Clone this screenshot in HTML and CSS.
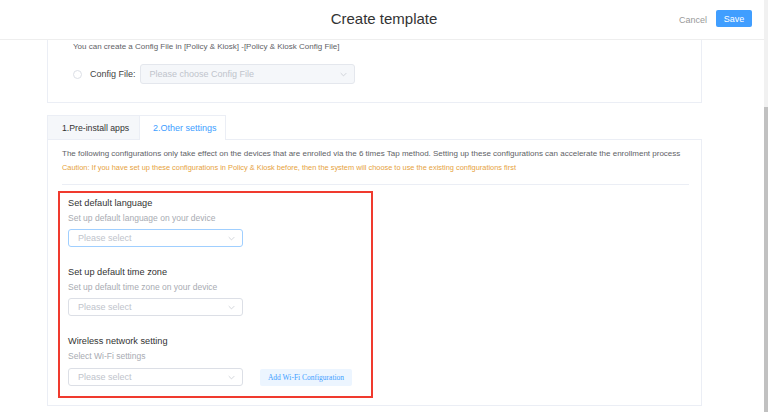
FILE: index.html
```html
<!DOCTYPE html>
<html lang="en">
<head>
    <meta charset="UTF-8">
    <meta name="viewport" content="width=device-width, initial-scale=1.0">
    <title>Create template</title>
    <link rel="stylesheet" href="styles.css">
</head>

<body>

<div class="page">
    <header class="topbar">
        <div></div>
        <h1 class="title">Create template</h1>
        <div class="actions">
            <button class="btn-cancel">Cancel</button>
            <button class="btn-save">Save</button>
        </div>
    </header>

    <main class="content">
        <!-- config file card, scrolled so its top is hidden -->
        <section class="card config-card">
            <p class="hint">You can create a Config File in [Policy &amp; Kiosk] -[Policy &amp; Kiosk Config File]</p>
            <div class="config-row">
                <span class="radio"></span>
                <span class="config-label">Config File:</span>
                <div class="select select-disabled">
                    <span>Please choose Config File</span>
                    <svg class="arrow" viewBox="0 0 10 6"><path d="M1 1l4 4 4-4" /></svg>
                </div>
            </div>
        </section>

        <section class="tabs-card">
            <div class="tabs">
                <div class="tab">1.Pre-install apps</div>
                <div class="tab tab-active">2.Other settings</div>
            </div>
            <div class="tab-panel">
                <p class="desc">The following configurations only take effect on the devices that are enrolled via the 6 times Tap method. Setting up these configurations can accelerate the enrollment process</p>
                <p class="caution">Caution: If you have set up these configurations in Policy &amp; Kiosk before, then the system will choose to use the existing configurations first</p>
                <div class="divider"></div>

                <div class="highlight">
                    <div class="field">
                        <div class="field-title">Set default language</div>
                        <div class="field-sub">Set up default language on your device</div>
                        <div class="select select-focus">
                            <span>Please select</span>
                            <svg class="arrow" viewBox="0 0 10 6"><path d="M1 1l4 4 4-4" /></svg>
                        </div>
                    </div>

                    <div class="field">
                        <div class="field-title">Set up default time zone</div>
                        <div class="field-sub">Set up default time zone on your device</div>
                        <div class="select">
                            <span>Please select</span>
                            <svg class="arrow" viewBox="0 0 10 6"><path d="M1 1l4 4 4-4" /></svg>
                        </div>
                    </div>

                    <div class="field">
                        <div class="field-title">Wireless network setting</div>
                        <div class="field-sub">Select Wi-Fi settings</div>
                        <div class="field-row">
                            <div class="select">
                                <span>Please select</span>
                                <svg class="arrow" viewBox="0 0 10 6"><path d="M1 1l4 4 4-4" /></svg>
                            </div>
                            <button class="btn-wifi">Add Wi-Fi Configuration</button>
                        </div>
                    </div>
                </div>
            </div>
        </section>
    </main>
</div>

<div class="scrollbar">
    <div class="thumb"></div>
</div>

</body>
</html>
```

FILE: styles.css
```css
/* Global Reset */
* {
    box-sizing: border-box;
    margin: 0;
    padding: 0;
    font-family: "Liberation Sans", Arial, sans-serif;
}

body {
    background: #fff;
    display: flex;
    height: 100vh;
    overflow: hidden;
}

.page {
    flex: 1;
    display: flex;
    flex-direction: column;
}

/* Header */
.topbar {
    height: 40px;
    flex-shrink: 0;
    display: grid;
    grid-template-columns: 1fr auto 1fr;
    align-items: center;
    border-bottom: 1px solid #eeeeee;
}

.title {
    font-size: 15px;
    font-weight: normal;
    color: #333;
    padding-left: 4px;
    margin-top: -3px;
}

.actions {
    display: flex;
    justify-content: flex-end;
    align-items: center;
    gap: 9px;
    padding-right: 12px;
}

button {
    border: none;
    background: none;
    cursor: pointer;
    white-space: nowrap;
}

.btn-cancel {
    font-size: 9px;
    color: #999;
}

.btn-save {
    width: 36px;
    height: 17px;
    font-size: 9px;
    color: #fff;
    background: #409eff;
    border-radius: 2px;
    margin-top: -2px;
}

/* Content */
.content {
    padding: 0 62px 0 47px;
    display: flex;
    flex-direction: column;
    gap: 12px;
}

.card {
    border: 1px solid #ebeef5;
    border-top: none;
}

.config-card {
    height: 63px;
    padding: 1px 0 0 25px;
}

.hint {
    font-size: 8px;
    color: #606266;
    line-height: 12px;
}

.config-row {
    display: flex;
    align-items: center;
    margin-top: 11px;
}

.radio {
    width: 9px;
    height: 9px;
    border: 1px solid #dcdfe6;
    border-radius: 50%;
    margin-right: 8px;
}

.config-label {
    font-size: 9px;
    color: #444;
    margin-right: 4px;
}

.select {
    width: 175px;
    height: 18px;
    border: 1px solid #dcdfe6;
    border-radius: 3px;
    display: flex;
    align-items: center;
    justify-content: space-between;
    padding: 0 7px 0 9px;
    font-size: 9px;
    color: #c0c4cc;
    background: #fff;
}

.select-disabled {
    width: 215px;
    height: 20px;
    background: #f5f7fa;
    border-color: #e4e7ed;
}

.select-focus {
    border-color: #a0cfff;
}

.arrow {
    width: 7px;
    height: 5px;
    fill: none;
    stroke: #c0c4cc;
    stroke-width: 1;
}

/* Tabs */
.tabs {
    display: flex;
}

.tab {
    height: 24px;
    padding: 0 14px;
    display: flex;
    align-items: center;
    white-space: nowrap;
    font-size: 8.7px;
    color: #333;
    background: #f5f7fa;
    border: 1px solid #ebeef5;
    border-bottom: none;
}

.tab:first-child {
    width: 93px;
}

.tab-active {
    width: 86px;
    padding-left: 13px;
    font-size: 9px;
    background: #fff;
    color: #409eff;
    border-left: none;
    height: 25px;
    margin-bottom: -1px;
    position: relative;
}

.tab-panel {
    border: 1px solid #ebeef5;
    padding: 8px 12px 7px 14px;
}

.desc {
    font-size: 8px;
    color: #606266;
    line-height: 12px;
    white-space: nowrap;
}

.caution {
    font-size: 7.4px;
    color: #e6a23c;
    line-height: 12px;
    margin-top: 2px;
    white-space: nowrap;
}

.divider {
    height: 1px;
    background: #ebeef5;
    margin-top: 10px;
}

/* Red annotation box around the fields */
.highlight {
    width: 315px;
    margin: 6px 0 0 -4px;
    border: 2px solid #f03a2e;
    padding: 3px 8px 10px 8px;
    display: flex;
    flex-direction: column;
    gap: 18px;
}

.field-title {
    font-size: 9.2px;
    color: #333;
    line-height: 14px;
}

.field-sub {
    font-size: 8.5px;
    color: #a8abb2;
    line-height: 12px;
    margin-top: 2px;
    margin-bottom: 5px;
}

.field:last-child .field-sub {
    margin-bottom: 6px;
}

.field-row {
    display: flex;
    align-items: center;
    gap: 17px;
}

.btn-wifi {
    width: 92px;
    height: 17px;
    background: #ecf5ff;
    color: #409eff;
    font-family: "Liberation Serif", serif;
    font-size: 7.5px;
    font-weight: normal;
    border-radius: 2px;
}

/* Scrollbar */
.scrollbar {
    width: 4px;
    background: #f1f1f1;
    display: flex;
    flex-direction: column;
}

.thumb {
    margin-top: 107px;
    flex: 1;
    background: #c1c1c1;
}
```
